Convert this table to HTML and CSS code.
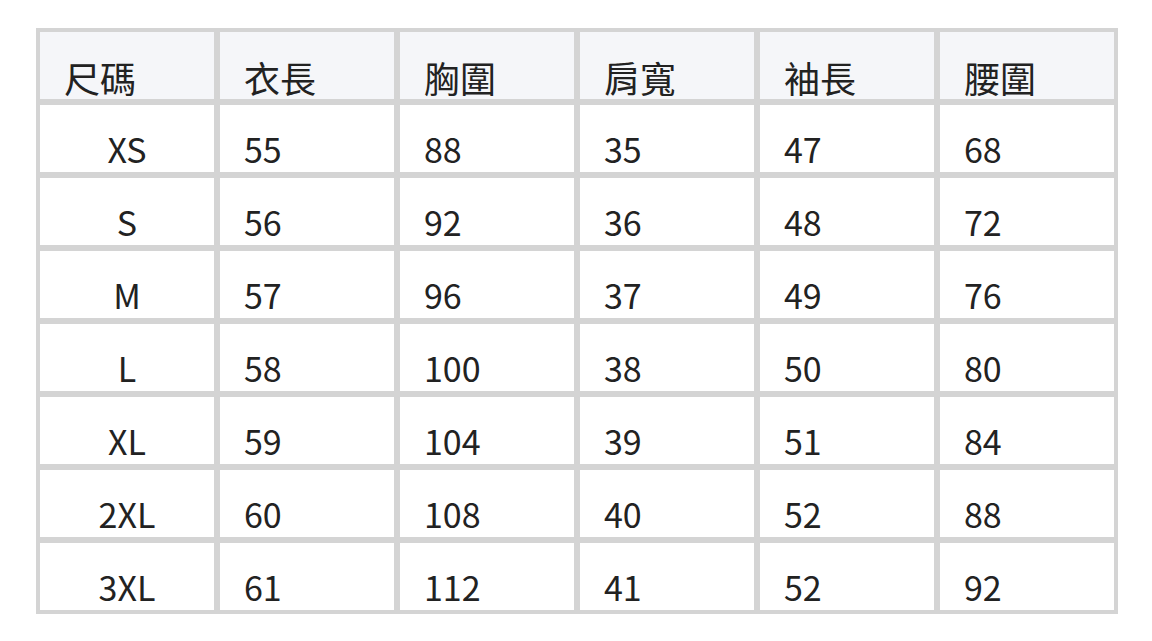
FILE: index.html
```html
<!DOCTYPE html>
<html lang="zh-Hant">
<head>
<meta charset="utf-8">
<title>尺碼表</title>
<link rel="stylesheet" href="styles.css">
</head>
<body>
<div class="wrap">
<table class="size-table">
  <thead>
    <tr><th>尺碼</th><th>衣長</th><th>胸圍</th><th>肩寬</th><th>袖長</th><th>腰圍</th></tr>
  </thead>
  <tbody>
    <tr><td class="size">XS</td><td>55</td><td>88</td><td>35</td><td>47</td><td>68</td></tr>
    <tr><td class="size">S</td><td>56</td><td>92</td><td>36</td><td>48</td><td>72</td></tr>
    <tr><td class="size">M</td><td>57</td><td>96</td><td>37</td><td>49</td><td>76</td></tr>
    <tr><td class="size">L</td><td>58</td><td>100</td><td>38</td><td>50</td><td>80</td></tr>
    <tr><td class="size">XL</td><td>59</td><td>104</td><td>39</td><td>51</td><td>84</td></tr>
    <tr><td class="size">2XL</td><td>60</td><td>108</td><td>40</td><td>52</td><td>88</td></tr>
    <tr><td class="size">3XL</td><td>61</td><td>112</td><td>41</td><td>52</td><td>92</td></tr>
  </tbody>
</table>
</div>
</body>
</html>
```
FILE: styles.css
```css
html, body {
  margin: 0;
  padding: 0;
  background: #ffffff;
}
.wrap {
  padding: 28px 0 0 36px;
}
.size-table {
  border-collapse: separate;
  border-spacing: 0;
  border: 1px solid #d4d4d4;
  font-family: "Noto Sans CJK TC", "Noto Sans", sans-serif;
  font-size: 34px;
  line-height: 40px;
  color: #222222;
  table-layout: fixed;
  width: 1082px;
}
.size-table th,
.size-table td {
  box-sizing: border-box;
  width: 180px;
  border: 3px solid #d4d4d4;
  padding: 24px 0 3px 24px;
  text-align: left;
  font-weight: 400;
  vertical-align: top;
  white-space: nowrap;
}
.size-table th {
  background: #f5f6f9;
  font-size: 36px;
  padding-top: 25px;
  padding-bottom: 2px;
}
.size-table td.size {
  text-align: center;
  padding-left: 0;
}
```
